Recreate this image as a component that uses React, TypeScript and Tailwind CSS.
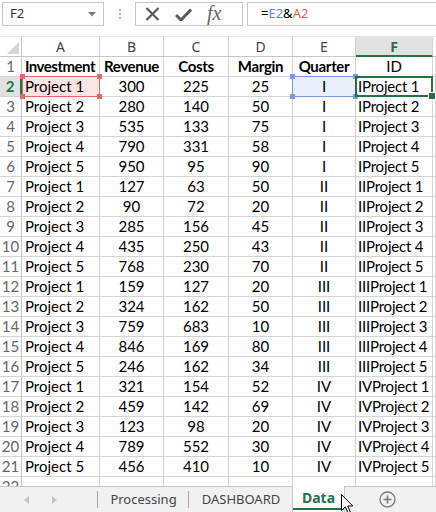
import React from "react";

const rows: [string, number, number, number, string][] = [
  ["Project 1", 300, 225, 25, "I"],
  ["Project 2", 280, 140, 50, "I"],
  ["Project 3", 535, 133, 75, "I"],
  ["Project 4", 790, 331, 58, "I"],
  ["Project 5", 950, 95, 90, "I"],
  ["Project 1", 127, 63, 50, "II"],
  ["Project 2", 90, 72, 20, "II"],
  ["Project 3", 285, 156, 45, "II"],
  ["Project 4", 435, 250, 43, "II"],
  ["Project 5", 768, 230, 70, "II"],
  ["Project 1", 159, 127, 20, "III"],
  ["Project 2", 324, 162, 50, "III"],
  ["Project 3", 759, 683, 10, "III"],
  ["Project 4", 846, 169, 80, "III"],
  ["Project 5", 246, 162, 34, "III"],
  ["Project 1", 321, 154, 52, "IV"],
  ["Project 2", 459, 142, 69, "IV"],
  ["Project 3", 123, 98, 20, "IV"],
  ["Project 4", 789, 552, 30, "IV"],
  ["Project 5", 456, 410, 10, "IV"],
];

const colW = ["w-[78px]", "w-[64px]", "w-[65px]", "w-[64px]", "w-[63px]", "w-[77px]"];
const cell = "shrink-0 h-full border-r border-b border-[#d4d4d4] flex items-center overflow-hidden whitespace-nowrap";

const Corners = ({ color }: { color: string }) => (
  <>
    <span className={`absolute -left-[3px] -top-[3px] h-[5px] w-[5px] ${color}`} />
    <span className={`absolute -right-[3px] -top-[3px] h-[5px] w-[5px] ${color}`} />
    <span className={`absolute -left-[3px] -bottom-[3px] h-[5px] w-[5px] ${color}`} />
    <span className={`absolute -right-[3px] -bottom-[3px] h-[5px] w-[5px] ${color}`} />
  </>
);

function RowHeader({ n, active }: { n: number; active?: boolean }) {
  return (
    <div
      className={
        active
          ? "w-[22px] shrink-0 h-full border-b border-[#d4d4d4] border-r-2 border-r-[#217346] bg-[#e1e1e1] flex items-center justify-center font-bold text-[#217346]"
          : "w-[22px] shrink-0 h-full border-b border-r border-[#d4d4d4] border-r-[#c6c6c6] flex items-center justify-center text-[#666]"
      }
    >
      {n}
    </div>
  );
}

export default function App() {
  return (
    <div className="w-[436px] h-[512px] overflow-hidden bg-white flex flex-col text-black select-none" style={{ fontFamily: "Lato, 'Liberation Sans', sans-serif" }}>
      {/* formula bar */}
      <div className="h-[36px] shrink-0 flex items-start pt-[2px] pl-[2px]" style={{ fontFamily: "'Noto Sans', 'Open Sans', sans-serif" }}>
        <div className="w-[102px] h-[24px] border border-[#c6c6c6] flex items-center justify-between pl-[7px] pr-[7px] text-[13px] text-[#333]">
          <span>F2</span>
          <svg width="8" height="5" viewBox="0 0 8 5"><path d="M0 0h8L4 4.5z" fill="#7a7a7a" /></svg>
        </div>
        <div className="w-[31px] h-[24px] flex flex-col items-center justify-center gap-[2px]">
          <span className="w-[2px] h-[2px] bg-[#b0b0b0]" />
          <span className="w-[2px] h-[2px] bg-[#b0b0b0]" />
          <span className="w-[2px] h-[2px] bg-[#b0b0b0]" />
        </div>
        <div className="w-[108px] h-[24px] border border-[#c6c6c6] flex items-center pl-[9px] gap-[15px]">
          <svg width="15" height="14" viewBox="0 0 15 14"><path d="M1.5 1l12 12M13.5 1l-12 12" stroke="#5a5a5a" strokeWidth="2.2" /></svg>
          <svg width="17" height="13" viewBox="0 0 17 13"><path d="M1 7l5 5L16 1.5" stroke="#5a5a5a" strokeWidth="3" fill="none" /></svg>
          <span className="italic text-[20px] text-[#666] leading-none -mt-[2px]" style={{ fontFamily: "'Liberation Serif', 'DejaVu Serif', serif" }}>fx</span>
        </div>
        <div className="ml-[4px] flex-1 h-[24px] border border-r-0 border-[#c6c6c6] flex items-center pl-[13px] text-[13px]">
          <span>=</span>
          <span className="text-[#5a86d6]">E2</span>
          <span>&amp;</span>
          <span className="text-[#e0605a]">A2</span>
        </div>
      </div>

      {/* column headers */}
      <div className="h-[21px] shrink-0 flex border-t border-[#e4e4e4] text-[14px] text-[#444]" style={{ fontFamily: "'Noto Sans', 'Open Sans', sans-serif" }}>
        <div className="w-[22px] shrink-0 h-full border-r border-b border-[#c6c6c6] relative">
          <svg className="absolute right-[2px] bottom-[2px]" width="12" height="12" viewBox="0 0 12 12"><path d="M12 0V12H0z" fill="#d6d6d6" /></svg>
        </div>
        {["A", "B", "C", "D", "E"].map((c, i) => (
          <div key={c} className={`${colW[i]} shrink-0 h-full border-r border-b border-[#d4d4d4] border-b-[#c6c6c6] flex items-center justify-center`}>
            {c}
          </div>
        ))}
        <div className="w-[77px] shrink-0 h-full border-r border-[#d4d4d4] border-b-2 border-b-[#217346] bg-[#e1e1e1] flex items-center justify-center font-bold text-[#217346]">
          F
        </div>
        <div className="flex-1 h-full border-b border-[#c6c6c6]" />
      </div>

      {/* grid */}
      <div className="flex-1 overflow-hidden text-[15px]">
        <div className="flex h-[20px]">
          <RowHeader n={1} />
          <div className={`${colW[0]} ${cell} pl-[3px] font-bold tracking-[-0.5px]`}>Investment</div>
          <div className={`${colW[1]} ${cell} justify-center font-bold tracking-[-0.4px]`}>Revenue</div>
          <div className={`${colW[2]} ${cell} justify-center font-bold tracking-[-0.3px]`}>Costs</div>
          <div className={`${colW[3]} ${cell} justify-center font-bold tracking-[-0.3px]`}>Margin</div>
          <div className={`${colW[4]} ${cell} justify-center font-bold tracking-[-0.3px]`}>Quarter</div>
          <div className={`${colW[5]} ${cell} justify-center`}>ID</div>
          <div className={`flex-1 ${cell}`} />
        </div>
        {rows.map((r, i) => {
          const n = i + 2;
          const first = i === 0;
          return (
            <div key={n} className="flex h-[20px]">
              <RowHeader n={n} active={first} />
              <div className={`${colW[0]} ${cell} pl-[3px] ${first ? "relative overflow-visible bg-[#fbe4e4]" : ""}`}>
                {r[0]}
                {first && (
                  <div className="absolute -top-px left-0 -right-px -bottom-px border-[1.5px] border-[#e06a6a]">
                    <Corners color="bg-[#e06a6a]" />
                  </div>
                )}
              </div>
              <div className={`${colW[1]} ${cell} justify-center`}>{r[1]}</div>
              <div className={`${colW[2]} ${cell} justify-center`}>{r[2]}</div>
              <div className={`${colW[3]} ${cell} justify-center`}>{r[3]}</div>
              <div className={`${colW[4]} ${cell} justify-center ${first ? "relative overflow-visible bg-[#eaf0fb] z-10" : ""}`}>
                {r[4]}
                {first && (
                  <div className="absolute -top-px -left-px -right-px -bottom-px border-[1.5px] border-[#7a9cdc]">
                    <Corners color="bg-[#7a9cdc]" />
                  </div>
                )}
              </div>
              <div className={`${colW[5]} ${cell} pl-[2px] tracking-[-0.2px] ${first ? "relative overflow-visible z-20" : ""}`}>
                {r[4] + r[0]}
                {first && (
                  <div className="absolute -top-px -left-px right-[-1px] -bottom-px border-2 border-[#217346]">
                    <span className="absolute -right-[4px] -bottom-[4px] h-[6px] w-[6px] bg-[#217346] outline outline-1 outline-white" />
                  </div>
                )}
              </div>
              <div className={`flex-1 ${cell}`} />
            </div>
          );
        })}
        <div className="flex h-[20px]">
          <RowHeader n={22} />
          {colW.map((w, i) => (
            <div key={i} className={`${w} ${cell}`} />
          ))}
          <div className={`flex-1 ${cell}`} />
        </div>
      </div>

      {/* sheet tabs */}
      <div className="h-[26px] shrink-0 flex bg-[#f1f1f1] text-[13px] text-[#444] relative" style={{ fontFamily: "'Noto Sans', 'Open Sans', sans-serif" }}>
        <div className="w-[97px] shrink-0 h-full border-t border-[#c6c6c6] flex items-center pl-[24px] gap-[23px]">
          <svg width="5" height="8" viewBox="0 0 5 8"><path d="M5 0v8L0 4z" fill="#c4c4c4" /></svg>
          <svg width="5" height="8" viewBox="0 0 5 8"><path d="M0 0v8l5-4z" fill="#c4c4c4" /></svg>
        </div>
        <div className="w-[91px] shrink-0 h-full border-t border-[#c6c6c6] flex items-center relative">
          <span className="absolute left-0 top-[4px] bottom-[4px] w-px bg-[#a6a6a6]" />
          <span className="w-full text-center pl-[2px]">Processing</span>
        </div>
        <div className="w-[104px] shrink-0 h-full border-t border-[#c6c6c6] flex items-center relative">
          <span className="absolute left-0 top-[4px] bottom-[4px] w-px bg-[#a6a6a6]" />
          <span className="w-full text-center pl-[2px]">DASHBOARD</span>
        </div>
        <div className="w-[53px] shrink-0 h-full bg-white border-x border-[#c6c6c6] flex flex-col">
          <span className="flex-1 flex items-center justify-center font-bold text-[#217346] text-[14px]">Data</span>
          <span className="h-[2px] mb-[2px] bg-[#217346]" />
        </div>
        <div className="flex-1 h-full border-t border-[#c6c6c6] flex items-center pl-[34px]">
          <svg width="17" height="17" viewBox="0 0 17 17">
            <circle cx="8.5" cy="8.5" r="7.5" fill="none" stroke="#7a7a7a" strokeWidth="1.3" />
            <path d="M8.5 4.5v8M4.5 8.5h8" stroke="#7a7a7a" strokeWidth="1.6" />
          </svg>
        </div>
        <svg className="absolute left-[341px] top-[8px]" width="13" height="20" viewBox="0 0 13 20">
          <path d="M0.5 0.5V16.5L4.3 12.8L7 19L9.3 18L6.7 12H11.8Z" fill="#fff" stroke="#000" strokeWidth="1" strokeLinejoin="round" />
        </svg>
      </div>
    </div>
  );
}
